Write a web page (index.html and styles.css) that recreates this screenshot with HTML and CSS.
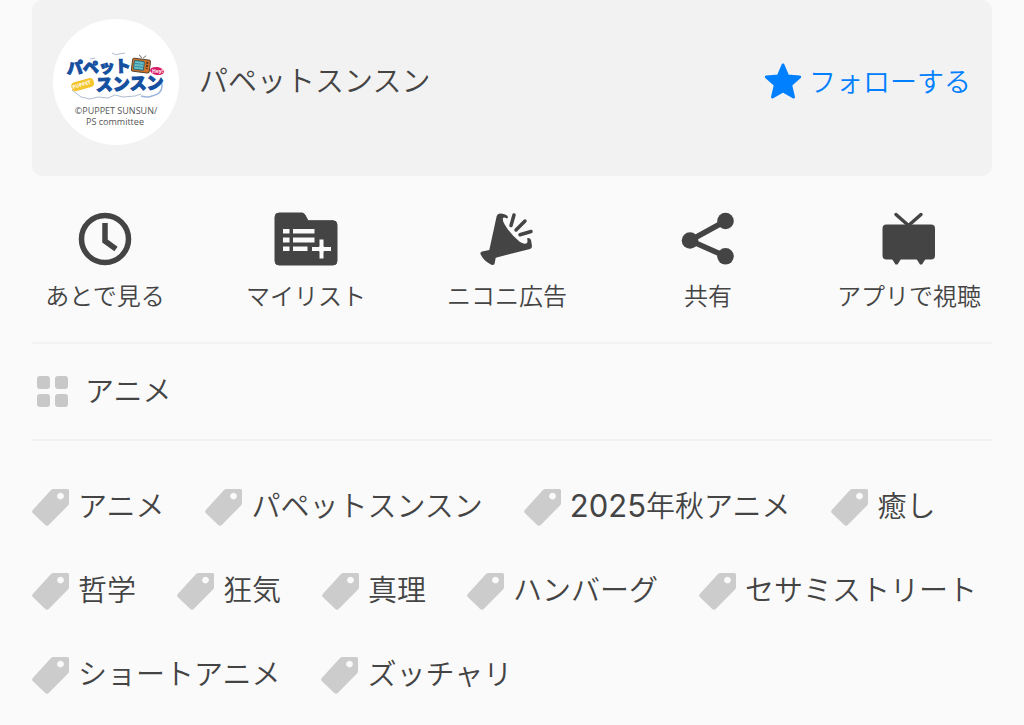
FILE: index.html
```
<!DOCTYPE html>
<html lang="ja">
<head>
    <meta charset="UTF-8">
    <meta name="viewport" content="width=device-width, initial-scale=1.0">
    <title>パペットスンスン</title>
    <link rel="stylesheet" href="styles.css">
</head>
<body>
    <svg class="symbols" aria-hidden="true">
        <symbol id="tag" viewBox="0 0 37 37">
            <path fill-rule="evenodd" d="M21.5 0H35.5Q37 0 37 1.5V14Q37 15.5 36 16.5L17 35.800Q15 37.500 13 35.800L1 24.300Q-.8 22.500 1 20.700L19 1Q20 0 21.500 0ZM28.500 3.700a3.400 3.400 0 1 0 .01 0Z"/>
        </symbol>
    </svg>
    <main class="page">
        <section class="channel">
            <a class="channel-link" href="#">
                <svg class="avatar" viewBox="0 0 126 126">
                    <circle cx="63" cy="63" r="63" fill="#fff"/>
                    <g fill="none" stroke="#9aabc4" stroke-width="0.8">
                        <path d="M59 34q4 3 7 1l6-1M37 40l5-1M19 71l9 7 9 2 8-2 10 1 7-3 8 2 12-1 6-2"/>
                        <path d="M88 77q7 2 11 0 10-2 10-10l-1-7" stroke="#9bb5dc" stroke-width="1.500"/>
                    </g>
                    <g class="logo-text">
                        <text x="14" y="55" font-size="16" transform="rotate(-2 14 55)">パペット</text>
                        <text x="43" y="72" font-size="17" transform="rotate(-2 43 72)">スンスン</text>
                    </g>
                    <g transform="rotate(7 87 46)">
                        <rect x="79" y="40" width="18" height="13" rx="2" fill="#cf7428" stroke="#5b4630"/>
                        <rect x="81" y="42" width="10" height="9" rx="1" fill="#67bfca" stroke="#2c6170"/>
                        <path d="M82 45h8M82 48h8" stroke="#338793"/>
                        <path d="M94 42v7" stroke="#5b3824" stroke-width="2" stroke-dasharray="2 1"/>
                        <path d="M88 39l-3-3M89 39l3-3" stroke="#888"/>
                    </g>
                    <g transform="rotate(-16 30 65)">
                        <rect x="18" y="61" width="23" height="9" rx="4" fill="#f5c52d"/>
                        <text x="19" y="67" font-size="5" class="badge-text">PUPPET</text>
                    </g>
                    <ellipse cx="104" cy="52" rx="7" ry="4" fill="#d91c63" transform="rotate(8 104 52)"/>
                    <text x="99" y="54" font-size="5" class="badge-text">Hey!</text>
                    <g class="credit">
                        <text x="63" y="95">©PUPPET SUNSUN/</text>
                        <text x="62" y="106">PS committee</text>
                    </g>
                </svg>
                <span>パペットスンスン</span>
            </a>
            <button class="follow" type="button">
                <svg viewBox="0 0 38 38">
                    <path d="M19 3l4.700 11 12 1-9 8 2.800 12L19 29 8.500 35l2.800-12-9-8 12-1z" stroke-width="3" stroke-linejoin="round"/>
                </svg>
                <span>フォローする</span>
            </button>
        </section>

        <nav class="actions">
            <button type="button">
                <svg viewBox="0 0 64 54">
                    <g fill="none" stroke-width="5.500">
                        <circle cx="32" cy="27" r="23.500"/>
                        <path d="M32 11v18l11 8"/>
                    </g>
                </svg>
                <span>あとで見る</span>
            </button>
            <button type="button">
                <svg viewBox="0 0 64 54" stroke="none">
                    <path d="M5 1H28Q30 1 31 3L34 8.700H59Q63 8.700 63 12.700V49Q63 53 59 53H5Q1 53 1 49V5Q1 1 5 1Z"/>
                    <g fill="#fafafa">
                        <path d="M8.500 16.500H16V22H8.500ZM8.500 25H16V31H8.500ZM8.500 34H16V39.500H8.500ZM18.500 16.500H41V22H18.500ZM18.500 25H41V31H18.500ZM18.500 34H34V39.500H18.500Z"/>
                        <path d="M45 27h5v7.500h7.500v5H50V47h-5v-7.500h-7.500v-5H45Z"/>
                    </g>
                </svg>
                <span>マイリスト</span>
            </button>
            <button type="button">
                <svg viewBox="0 0 64 54">
                    <path stroke="none" d="M21.700 4Q22.500 1.500 25 1.500Q30 1.500 32.500 4Q33.500 6 32 6.500Q29 5 28 6Q27 8 30 13Q36 23 45 30Q50 33 52 31Q53 29 52 26.500Q54.500 25 56 28L57 34Q57 36.500 55 37L20.700 45.700L19.500 52Q18 54 15 52Q8 48 5.500 42Q5 40 7 39.500L14.300 38Z"/>
                    <path d="M39 3l-3 10.500M50 9l-9 9M56 19.500l-11 3.200" fill="none" stroke-width="3.500" stroke-linecap="round"/>
                </svg>
                <span>ニコニ広告</span>
            </button>
            <button type="button">
                <svg viewBox="0 0 64 54">
                    <path d="M49.500 9L14 28.500l35.500 15.800" fill="none" stroke-width="5.500"/>
                    <g stroke="none">
                        <circle cx="49.500" cy="9" r="8.300"/>
                        <circle cx="14" cy="28.500" r="8.300"/>
                        <circle cx="49.500" cy="44.300" r="8.300"/>
                    </g>
                </svg>
                <span>共有</span>
            </button>
            <button type="button">
                <svg viewBox="0 0 64 54">
                    <rect x="5.500" y="12.500" width="52.500" height="35" rx="4" stroke="none"/>
                    <path d="M19 2.500l12.500 11L44 2.500" fill="none" stroke-width="3.500" stroke-linecap="round"/>
                    <path d="M15 47h9l-3.500 5.500h-2zM39.500 47h9L45 52.500h-2z" stroke="none"/>
                </svg>
                <span>アプリで視聴</span>
            </button>
        </nav>

        <a class="genre" href="#">
            <svg viewBox="0 0 32 32">
                <rect width="13" height="13" rx="3"/>
                <rect x="18" width="13" height="13" rx="3"/>
                <rect y="18" width="13" height="13" rx="3"/>
                <rect x="18" y="18" width="13" height="13" rx="3"/>
            </svg>
            <span>アニメ</span>
        </a>

        <div class="tags">
            <a href="#"><svg><use href="#tag"/></svg>アニメ</a>
            <a href="#"><svg><use href="#tag"/></svg>パペットスンスン</a>
            <a href="#"><svg><use href="#tag"/></svg><span><span class="year">2025</span>年秋アニメ</span></a>
            <a href="#"><svg><use href="#tag"/></svg>癒し</a>
            <a href="#"><svg><use href="#tag"/></svg>哲学</a>
            <a href="#"><svg><use href="#tag"/></svg>狂気</a>
            <a href="#"><svg><use href="#tag"/></svg>真理</a>
            <a href="#"><svg><use href="#tag"/></svg>ハンバーグ</a>
            <a href="#"><svg><use href="#tag"/></svg>セサミストリート</a>
            <a href="#"><svg><use href="#tag"/></svg>ショートアニメ</a>
            <a href="#"><svg><use href="#tag"/></svg>ズッチャリ</a>
        </div>
    </main>
</body>
</html>
```
FILE: styles.css
```
* { box-sizing: border-box; }
body { margin: 0; background-color: #fafafa; color: #444; font-family: "Noto Sans CJK JP", sans-serif; font-size: 29px; font-weight: 350; line-height: 32px; }
a { color: inherit; text-decoration: none; }
button { padding: 0; border: 0; background: none; color: inherit; font: inherit; cursor: pointer; }
svg { flex: none; }
.symbols { display: none; }
.page { padding: 0 32px 28px; }
.channel { display: flex; justify-content: space-between; align-items: flex-start; padding: 19px 21px 31px; background-color: #f2f2f2; border-radius: 10px; }
.channel-link { display: flex; align-items: center; gap: 20px; }
.channel-link span { padding-bottom: 6px; }
.avatar { width: 126px; height: 126px; }
.logo-text { fill: #14509f; stroke: #14509f; stroke-width: 1px; font-weight: 900; }
.badge-text { fill: #fff; font-family: "Open Sans", sans-serif; font-weight: 700; }
.credit { fill: #555; font-family: "Open Sans", sans-serif; font-size: 9px; font-weight: 400; text-anchor: middle; }
.follow { display: flex; align-items: center; gap: 7px; height: 124px; color: #0080ff; font-size: 27px; }
.follow svg { width: 38px; height: 38px; fill: currentColor; stroke: currentColor; }
.actions { display: flex; justify-content: space-between; padding: 36px 10px 30px 0; border-bottom: 2px solid #f2f2f2; }
.actions button { display: flex; flex-direction: column; align-items: center; gap: 12px; width: 146px; font-size: 24px; line-height: 34px; white-space: nowrap; }
.actions svg { width: 64px; height: 54px; fill: currentColor; stroke: currentColor; }
.genre { display: flex; align-items: flex-start; gap: 16px; padding: 32px 5px 31px; border-bottom: 2px solid #f2f2f2; }
.genre svg { width: 32px; height: 32px; fill: #c8c8c8; }
.genre span { line-height: 26px; }
.tags { display: flex; flex-wrap: wrap; gap: 47px 41px; padding-top: 48px; }
.tags a { display: flex; align-items: flex-start; gap: 9px; height: 37px; line-height: 30px; white-space: nowrap; }
.tags svg { width: 37px; height: 37px; fill: #ccc; }
.year { font-family: Inter, sans-serif; font-size: 31px; font-weight: 400; line-height: 1px; }
```
